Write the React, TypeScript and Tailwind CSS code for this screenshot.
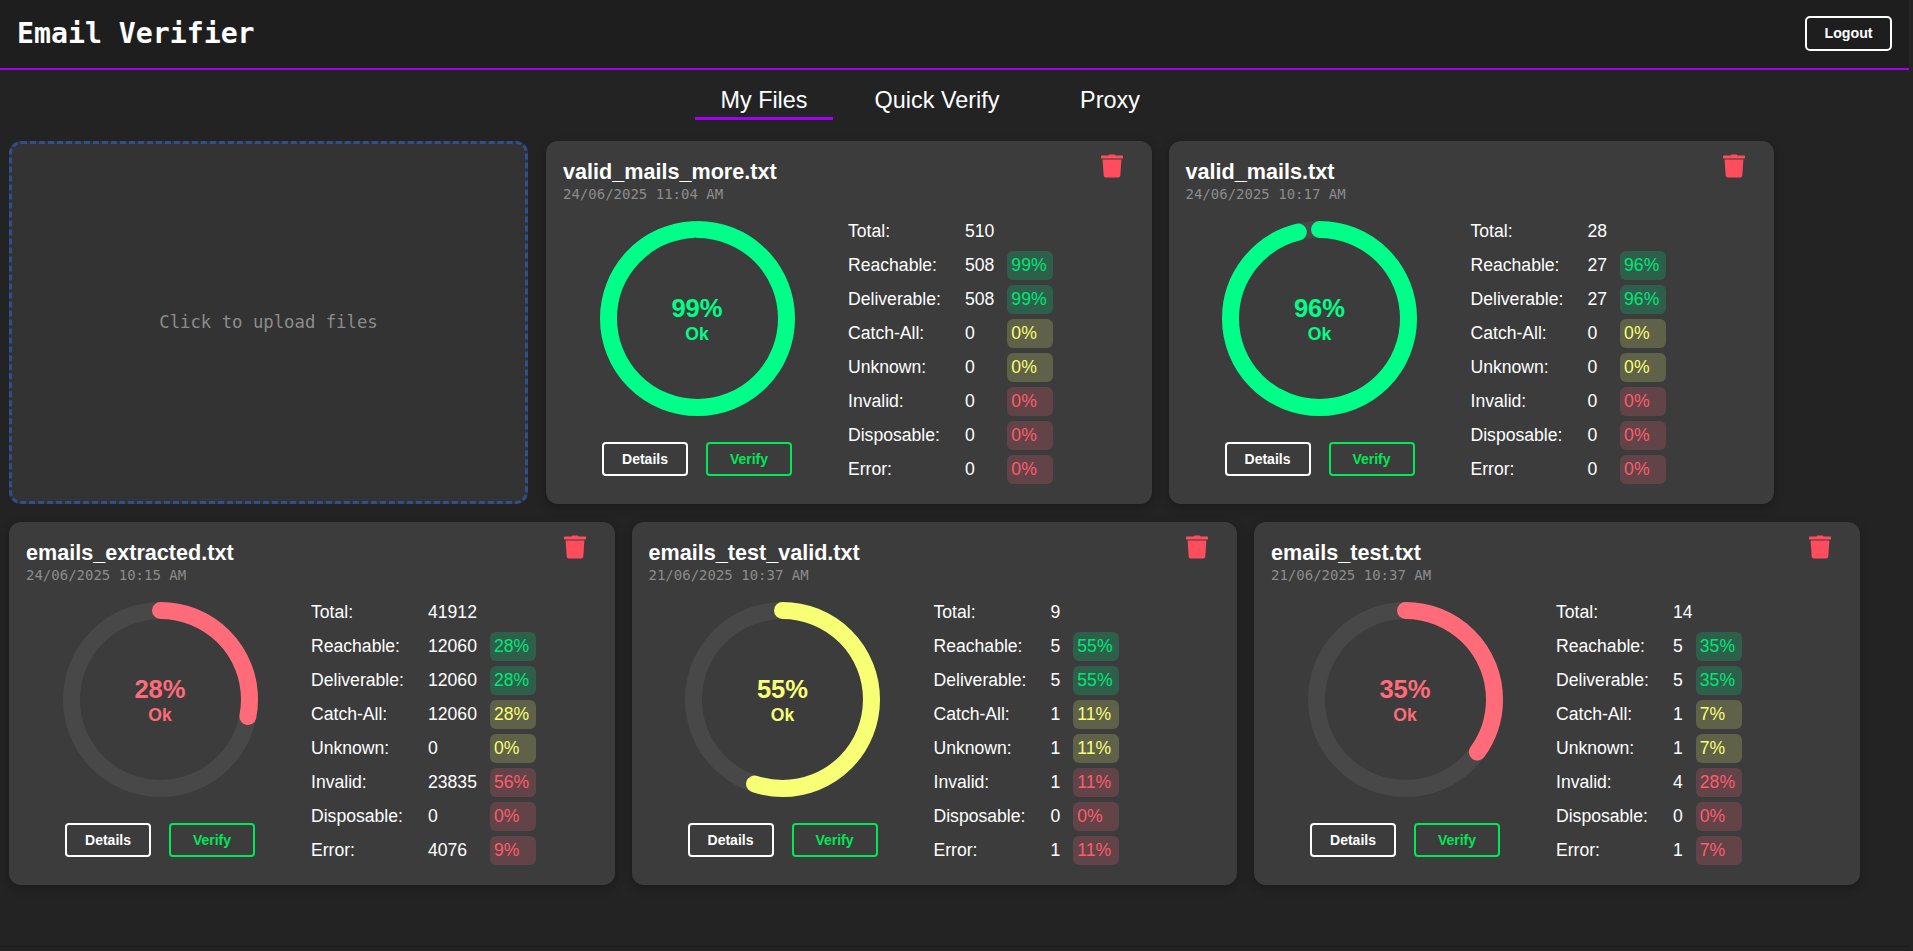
const tones = {
  green: { text: "text-[#00ff88]", bar: "#00ff88" },
  yellow: { text: "text-[#f7ff75]", bar: "#f7ff75" },
  red: { text: "text-[#ff6b78]", bar: "#ff6b78" },
};

const files = [
  { name: "valid_mails_more.txt", date: "24/06/2025 11:04 AM", pct: 99, tone: tones.green, total: 510, counts: [[508, 99], [508, 99], [0, 0], [0, 0], [0, 0], [0, 0], [0, 0]] },
  { name: "valid_mails.txt", date: "24/06/2025 10:17 AM", pct: 96, tone: tones.green, total: 28, counts: [[27, 96], [27, 96], [0, 0], [0, 0], [0, 0], [0, 0], [0, 0]] },
  { name: "emails_extracted.txt", date: "24/06/2025 10:15 AM", pct: 28, tone: tones.red, total: 41912, counts: [[12060, 28], [12060, 28], [12060, 28], [0, 0], [23835, 56], [0, 0], [4076, 9]] },
  { name: "emails_test_valid.txt", date: "21/06/2025 10:37 AM", pct: 55, tone: tones.yellow, total: 9, counts: [[5, 55], [5, 55], [1, 11], [1, 11], [1, 11], [0, 0], [1, 11]] },
  { name: "emails_test.txt", date: "21/06/2025 10:37 AM", pct: 35, tone: tones.red, total: 14, counts: [[5, 35], [5, 35], [1, 7], [1, 7], [4, 28], [0, 0], [1, 7]] },
];

const rows = [
  { label: "Reachable:", badge: "bg-[#2e5f4b] text-[#00e676]" },
  { label: "Deliverable:", badge: "bg-[#2e5f4b] text-[#00e676]" },
  { label: "Catch-All:", badge: "bg-[#5f6149] text-[#f7ff75]" },
  { label: "Unknown:", badge: "bg-[#5f6149] text-[#f7ff75]" },
  { label: "Invalid:", badge: "bg-[#614348] text-[#ff5c6c]" },
  { label: "Disposable:", badge: "bg-[#614348] text-[#ff5c6c]" },
  { label: "Error:", badge: "bg-[#614348] text-[#ff5c6c]" },
];

function TrashIcon() {
  return (
    <svg width="22" height="24" viewBox="0 0 22 24" fill="#ff4d5e">
      <path d="M7.5 1.6C7.8 .8 8.4 .5 9 .5h4c.6 0 1.2.3 1.5 1.1H21c.6 0 1 .4 1 1v.9c0 .6-.4 1-1 1H1c-.6 0-1-.4-1-1v-.9c0-.6.4-1 1-1z" />
      <path d="M1.6 5.6h18.8l-1.1 16c-.1 1.2-1 2-2.1 2H4.8c-1.1 0-2-.8-2.1-2z" />
    </svg>
  );
}

function Ring({ pct, color }: { pct: number; color: string }) {
  const r = 89;
  const len = 2 * Math.PI * r;
  return (
    <div className="relative h-[195px] w-[195px]">
      <svg width="195" height="195" viewBox="0 0 195 195" className="-rotate-90">
        <circle cx="97.5" cy="97.5" r={r} fill="none" stroke="#484848" strokeWidth="17" />
        <circle
          cx="97.5"
          cy="97.5"
          r={r}
          fill="none"
          stroke={color}
          strokeWidth="17"
          strokeLinecap="round"
          strokeDasharray={`${(len * pct) / 100} ${len}`}
        />
      </svg>
      <div className="absolute inset-0 flex flex-col items-center justify-center" style={{ color }}>
        <span className="text-[25.6px] leading-[30px] font-bold">{pct}%</span>
        <span className="text-[17.6px] leading-[22px] font-bold">Ok</span>
      </div>
    </div>
  );
}

function FileCard({ file }: { file: (typeof files)[number] }) {
  return (
    <div className="h-[363px] w-[605.5px] rounded-[12px] bg-[#3c3c3c] pl-[17px] shadow-[0_3px_10px_rgba(0,0,0,0.25)]">
      <div className="flex justify-between">
        <div className="pt-[18px]">
          <div className="text-[21.6px] leading-[26px] font-bold text-white">{file.name}</div>
          <div className="mt-[1px] font-['DejaVu_Sans_Mono',monospace] text-[14px] leading-[16px] text-[#8c8c8c]">{file.date}</div>
        </div>
        <div className="pt-[13px] pr-[29px]">
          <TrashIcon />
        </div>
      </div>
      <div className="mt-[15px] flex">
        <div className="flex w-[268px] flex-col items-center pt-[4px]">
          <Ring pct={file.pct} color={file.tone.bar} />
          <div className="mt-[26px] flex gap-[18px]">
            <button className="h-[34px] w-[86px] rounded-[4px] border-2 border-white text-[14px] font-bold text-white">Details</button>
            <button className="h-[34px] w-[86px] rounded-[4px] border-2 border-[#00e855] text-[14px] font-bold text-[#00e855]">Verify</button>
          </div>
        </div>
        <div className="ml-[17px] grid grid-cols-[117px_auto_46px] content-start justify-start gap-y-[5px] text-[17.6px] leading-[29px] text-white">
          <span>Total:</span>
          <span>{file.total}</span>
          <span />
          {rows.map((row, i) => (
            <div key={row.label} className="contents">
              <span>{row.label}</span>
              <span className="pr-[13px]">{file.counts[i][0]}</span>
              <span className={`h-[29px] rounded-[6px] pl-[4px] ${row.badge}`}>{file.counts[i][1]}%</span>
            </div>
          ))}
        </div>
      </div>
    </div>
  );
}

export default function App() {
  return (
    <div className="h-[951px] w-full overflow-hidden bg-[#232323] font-['Liberation_Sans',sans-serif]">
      <div className="h-[947px] w-[1909px] border-b border-[#1a1a1a]">
        <header className="flex h-[70px] items-center justify-between border-b-2 border-[#a100f2] bg-[#1e1e1e] pr-[17px] pl-[17px]">
          <h1 className="font-['DejaVu_Sans_Mono',monospace] text-[28.2px] font-bold text-white">Email Verifier</h1>
          <button className="mt-[-1px] h-[35px] w-[87px] rounded-[5px] border-2 border-white text-[14.2px] font-bold text-white">Logout</button>
        </header>
        <nav className="flex justify-center">
          {["My Files", "Quick Verify", "Proxy"].map((tab, i) => (
            <div
              key={tab}
              className={`mr-[35px] h-[50px] w-[138px] border-b-[3px] pt-[14px] text-center text-[23.4px] leading-[33px] text-white ${i === 0 ? "border-[#a100f2]" : "border-transparent"}`}
            >
              {tab}
            </div>
          ))}
        </nav>
        <div className="mt-[21px] flex flex-wrap gap-x-[17px] gap-y-[18px] pl-[9px]">
          <div className="mr-px flex h-[363px] w-[519px] items-center justify-center rounded-[12px] border-[3px] border-dashed border-[#2f4f8f] bg-[#333333] font-['DejaVu_Sans_Mono',monospace] text-[17.3px] text-[#8c8c8c]">
            Click to upload files
          </div>
          {files.map((file) => (
            <FileCard key={file.name} file={file} />
          ))}
        </div>
      </div>
    </div>
  );
}
